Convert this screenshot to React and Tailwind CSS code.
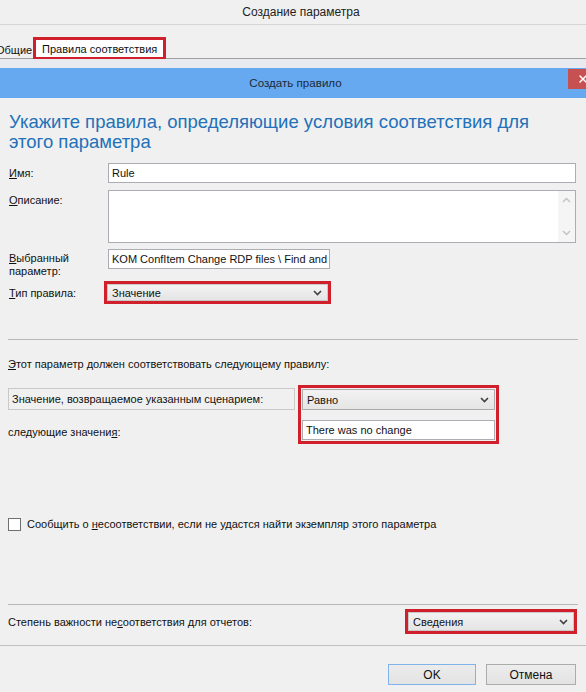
import { X } from "lucide-react";

const font = { fontFamily: '"Liberation Sans", Arial, sans-serif' };

// Small chevron used by the Windows style combo boxes
function Chevron() {
  return (
    <svg width="9" height="6" viewBox="0 0 9 6" className="shrink-0">
      <path d="M1 1 L4.5 4.5 L8 1" fill="none" stroke="#404040" strokeWidth="1.6" />
    </svg>
  );
}

function Combo(props) {
  return (
    <div
      className={
        "flex items-center justify-between border border-[#acacac] bg-gradient-to-b from-[#f2f2f2] to-[#e5e5e5] pl-[4px] pr-[5px] " +
        props.className
      }
    >
      <span>{props.value}</span>
      <Chevron />
    </div>
  );
}

function RedBox(props) {
  return <div className={"border-[3px] border-[#d0202c] " + props.className}>{props.children}</div>;
}

export default function App() {
  return (
    <div className="w-[586px] h-[692px] overflow-hidden bg-[#f0f0f0] text-[11px] leading-[14px] text-[#111] flex flex-col" style={font}>
      {/* window title */}
      <div className="h-[25px] shrink-0 flex items-center justify-center pl-[16px] border-b border-[#d6d6d6] text-[12px] text-[#222]">
        Создание параметра
      </div>

      {/* tab strip */}
      <div className="h-[34px] shrink-0 flex items-end border-b border-[#a0a0a0]">
        <div className="-ml-[6px] w-[38px] h-[19px] pl-[2px] flex items-center mb-[-1px] whitespace-nowrap">Общие</div>
        <div className="ml-[1px] mb-[-2px] h-[23px] w-[133px] border-[3px] border-[#d0202c] bg-white flex items-center pl-[6px] whitespace-nowrap">
          Правила соответствия
        </div>
      </div>
      <div className="h-[9px] shrink-0 bg-[#e8eaf0]"></div>

      {/* inner dialog caption */}
      <div className="h-[30px] shrink-0 bg-[#66a9f0] flex items-center relative">
        <div className="flex-1 text-center pl-[5px] text-[11.6px] text-[#1d2a3a]">Создать правило</div>
        <div className="absolute right-0 top-[1px] w-[18px] h-[20px] bg-[#c75050] flex items-center justify-end overflow-hidden">
          <X size={12} color="#ffffff" strokeWidth={3} className="-mr-[3px]" />
        </div>
      </div>

      {/* content */}
      <div className="flex flex-col">
        <div className="mt-[14px] pl-[9px] text-[18.5px] leading-[20px] text-[#2271b9]">
          Укажите правила, определяющие условия соответствия для
          <br />
          этого параметра
        </div>

        <div className="mt-[11px] flex items-center">
          <div className="w-[108px] pl-[9px]">
            <u>И</u>мя:
          </div>
          <div className="w-[468px] h-[20px] border border-[#abadb3] bg-white flex items-center pl-[3px]">Rule</div>
        </div>

        <div className="mt-[7px] flex items-start">
          <div className="w-[108px] pl-[9px] pt-[3px]">
            <u>О</u>писание:
          </div>
          <div className="w-[468px] h-[53px] border border-[#abadb3] bg-white flex justify-end">
            <div className="w-[17px] h-full bg-[#f5f5f5] flex flex-col items-center justify-between py-[6px]">
              <svg width="9" height="6" viewBox="0 0 9 6">
                <path d="M1 5 L4.5 1.5 L8 5" fill="none" stroke="#c2c2c2" strokeWidth="1.4" />
              </svg>
              <svg width="9" height="6" viewBox="0 0 9 6">
                <path d="M1 1 L4.5 4.5 L8 1" fill="none" stroke="#c2c2c2" strokeWidth="1.4" />
              </svg>
            </div>
          </div>
        </div>

        <div className="mt-[6px] flex items-start">
          <div className="w-[108px] pl-[9px] pt-[3px] leading-[13px]">
            <u>В</u>ыбранный
            <br />
            параметр:
          </div>
          <div className="w-[222px] h-[20px] border border-[#abadb3] bg-white flex items-center pl-[3px] overflow-hidden whitespace-nowrap">
            KOM ConfItem Change RDP files \ Find and c
          </div>
        </div>

        <div className="mt-[3px] flex items-center">
          <div className="w-[104px] pl-[9px]">
            <u>Т</u>ип правила:
          </div>
          <RedBox className="w-[227px] h-[23px]">
            <Combo value="Значение" className="h-full border-[#c8c8c8]" />
          </RedBox>
        </div>

        <div className="mt-[35px] mx-[8px] border-t border-[#b8b8b8]"></div>

        <div className="mt-[17px] pl-[8px]">
          <u>Э</u>тот параметр должен соответствовать следующему правилу:
        </div>

        <div className="mt-[14px] flex items-start">
          <div className="w-[298px] pl-[8px]">
            <div className="mt-[3px] w-[287px] h-[22px] border border-[#c9c9c9] flex items-center pl-[3px]">
              Значение, возвращаемое указанным сценарием:
            </div>
            <div className="mt-[15px]">
              следующие значени<u>я</u>:
            </div>
          </div>
          <RedBox className="w-[201px] p-[1px] flex flex-col">
            <Combo value="Равно" className="h-[21px]" />
            <div className="mt-[10px] h-[20px] border border-[#abadb3] bg-white flex items-center pl-[3px]">
              There was no change
            </div>
          </RedBox>
        </div>

        <div className="mt-[73px] flex items-center pl-[8px]">
          <div className="w-[13px] h-[13px] border border-[#707070] bg-white"></div>
          <div className="ml-[6px]">
            Сообщить о <u>н</u>есоответствии, если не удастся найти экземпляр этого параметра
          </div>
        </div>

        <div className="mt-[73px] mx-[8px] border-t border-[#b8b8b8]"></div>

        <div className="mt-[4px] flex items-center">
          <div className="w-[405px] pl-[8px]">
            Степень важности не<u>с</u>оответствия для отчетов:
          </div>
          <RedBox className="w-[172px] h-[25px]">
            <Combo value="Сведения" className="h-full border-[#c8c8c8]" />
          </RedBox>
        </div>

        <div className="mt-[11px] border-t border-[#c0c0c0]"></div>

        <div className="mt-[18px] flex justify-end gap-[10px] pr-[10px]">
          <button className="w-[88px] h-[21px] border border-[#7eb4ea] bg-gradient-to-b from-[#ececec] to-[#e3e3e3] text-[12px] leading-[14px] text-[#111]">
            OK
          </button>
          <button className="w-[90px] h-[21px] border border-[#acacac] bg-gradient-to-b from-[#ececec] to-[#e3e3e3] text-[12px] leading-[14px] text-[#111]">
            Отмена
          </button>
        </div>
      </div>
    </div>
  );
}
